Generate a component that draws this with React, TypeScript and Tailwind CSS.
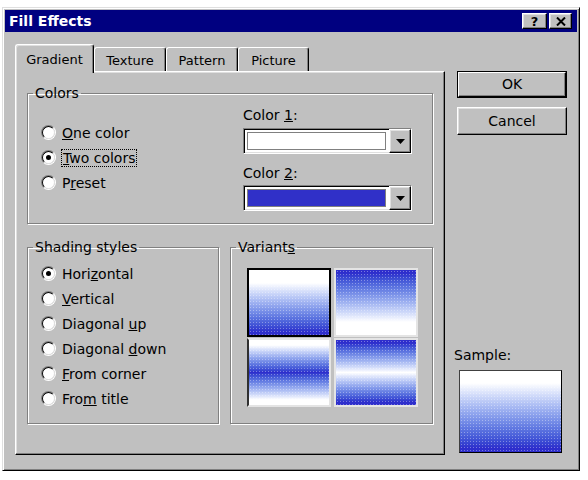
import type { ReactNode } from "react";

const raised =
  "border border-t-white border-l-white border-r-black border-b-black shadow-[inset_-1px_-1px_0_#808080,inset_1px_1px_0_#dfdfdf]";
const sunken =
  "border border-t-[#808080] border-l-[#808080] border-r-white border-b-white shadow-[inset_1px_1px_0_#000,inset_-1px_-1px_0_#dfdfdf]";
const etched = "border border-[#808080] shadow-[inset_1px_1px_0_#fff,1px_1px_0_#fff]";

const Radio = ({ checked }: { checked?: boolean }) => (
  <span className="size-[15px] shrink-0 rounded-full border border-t-[#808080] border-l-[#808080] border-r-white border-b-white">
    <span className="flex size-full items-center justify-center rounded-full border border-t-black border-l-black border-r-[#dfdfdf] border-b-[#dfdfdf] bg-white">
      {checked && <span className="size-[5px] rounded-full bg-black" />}
    </span>
  </span>
);

const Option = ({
  children,
  checked,
  focus,
}: {
  children: ReactNode;
  checked?: boolean;
  focus?: boolean;
}) => (
  <div className="flex h-[25px] items-center">
    <Radio checked={checked} />
    <span
      className={
        focus
          ? "ml-[5px] border border-dotted border-black px-px leading-[16px]"
          : "ml-[6px] leading-[16px]"
      }
    >
      {children}
    </span>
  </div>
);

const ColorCombo = ({ fill }: { fill: string }) => (
  <div className={`flex h-[26px] w-[169px] bg-white ${sunken}`}>
    <div className="flex flex-1 p-[3px]">
      <div className={`flex-1 border border-[#808080] ${fill}`} />
    </div>
    <div className={`flex w-[22px] items-center justify-center bg-[#c0c0c0] ${raised}`}>
      <svg width="9" height="5" viewBox="0 0 9 5">
        <path d="M0 0h9L4.5 5z" fill="#000" />
      </svg>
    </div>
  </div>
);

const Group = ({
  title,
  className,
  children,
}: {
  title: ReactNode;
  className: string;
  children: ReactNode;
}) => (
  <fieldset className={`${etched} ${className}`}>
    <legend className="ml-[5px] px-[2px] leading-[16px]">{title}</legend>
    {children}
  </fieldset>
);

// gradient with a light dither dot texture on top
const Shade = ({ className }: { className: string }) => (
  <div className={`relative overflow-hidden ${className}`}>
    <div className="absolute inset-0 bg-[radial-gradient(circle,rgba(255,255,255,0.35)_0.6px,transparent_1px)] bg-[length:3px_3px]" />
  </div>
);

const tabs = [
  { label: "Gradient", w: "w-[79px]" },
  { label: "Texture", w: "w-[72px]" },
  { label: "Pattern", w: "w-[72px]" },
  { label: "Picture", w: "w-[71px]" },
];

export default function App() {
  return (
    <div className="min-h-screen bg-white pl-[2px] pt-[7px] font-['DejaVu_Sans',sans-serif] text-[14px] text-black">
      <div className="flex h-[464px] w-[578px] flex-col border border-t-[#dfdfdf] border-l-[#dfdfdf] border-r-black border-b-black bg-[#c0c0c0] p-[2px] shadow-[inset_1px_1px_0_#fff,inset_-1px_-1px_0_#808080]">
        {/* title bar */}
        <div className="flex h-[22px] shrink-0 items-center justify-between bg-[#000080] pl-[4px] pr-[5px]">
          <span className="text-[14px] font-bold text-white">Fill Effects</span>
          <div className="flex gap-[2px]">
            <div className={`flex h-[16px] w-[25px] items-center justify-center bg-[#c0c0c0] ${raised}`}>
              <span className="text-[13px] font-bold leading-none">?</span>
            </div>
            <div className={`flex h-[16px] w-[23px] items-center justify-center bg-[#c0c0c0] ${raised}`}>
              <svg width="10" height="9" viewBox="0 0 10 9">
                <path d="M1 0.5l8 8M9 0.5l-8 8" stroke="#000" strokeWidth="2" />
              </svg>
            </div>
          </div>
        </div>

        <div className="flex flex-1 pl-[10px] pt-[12px] pb-[13px]">
          {/* tabs + page */}
          <div className="flex w-[430px] flex-col">
            <div className="flex h-[27px] items-end">
              {tabs.map((t, i) =>
                i === 0 ? (
                  <div
                    key={t.label}
                    className={`relative z-10 -mb-[2px] flex h-[29px] ${t.w} items-start justify-center rounded-t-[3px] border-l border-t border-r border-t-white border-l-white border-r-black bg-[#c0c0c0] pt-[7px] text-[13px] leading-[16px] shadow-[inset_-1px_0_0_#808080,inset_1px_1px_0_#dfdfdf]`}
                  >
                    {t.label}
                  </div>
                ) : (
                  <div
                    key={t.label}
                    className={`flex h-[24px] ${t.w} items-start justify-center rounded-t-[3px] border-l border-t border-r border-t-white border-l-white border-r-black pt-[5px] text-[13px] leading-[16px] shadow-[inset_-1px_0_0_#808080]`}
                  >
                    {t.label}
                  </div>
                )
              )}
            </div>

            <div className={`h-[384px] pl-[11px] pt-[13px] ${raised}`}>
              <Group title="Colors" className="h-[139px] w-[406px]">
                <div className="flex">
                  <div className="w-[215px] pl-[13px] pt-[19px]">
                    <Option>
                      <u>O</u>ne color
                    </Option>
                    <Option checked focus>
                      <u>T</u>wo colors
                    </Option>
                    <Option>
                      P<u>r</u>eset
                    </Option>
                  </div>
                  <div className="pt-[6px]">
                    <div className="leading-[16px]">
                      Color <u>1</u>:
                    </div>
                    <div className="mt-[5px]">
                      <ColorCombo fill="bg-white" />
                    </div>
                    <div className="mt-[11px] leading-[16px]">
                      Color <u>2</u>:
                    </div>
                    <div className="mt-[4px]">
                      <ColorCombo fill="bg-[#3030c8]" />
                    </div>
                  </div>
                </div>
              </Group>

              <div className="mt-[15px] flex gap-[11px]">
                <Group title="Shading styles" className="h-[185px] w-[192px]">
                  <div className="pl-[13px] pt-[6px]">
                    <Option checked>
                      Hori<u>z</u>ontal
                    </Option>
                    <Option>
                      <u>V</u>ertical
                    </Option>
                    <Option>
                      Diagonal <u>u</u>p
                    </Option>
                    <Option>
                      Diagonal <u>d</u>own
                    </Option>
                    <Option>
                      <u>F</u>rom corner
                    </Option>
                    <Option>
                      Fro<u>m</u> title
                    </Option>
                  </div>
                </Group>

                <Group
                  title={
                    <>
                      Variant<u>s</u>
                    </>
                  }
                  className="h-[185px] w-[203px]"
                >
                  <div className="grid grid-cols-[84px_84px] grid-rows-[69px_69px] gap-x-[3px] gap-y-px pl-[16px] pt-[13px]">
                    <Shade className="border-2 border-black bg-linear-to-b from-white from-20% to-[#2e2ecc] to-95%" />
                    <Shade className="border-2 border-[#e4e4e4] bg-linear-to-b from-[#2e2ecc] from-5% to-white to-80%" />
                    <Shade className="border-2 border-[#e4e4e4] border-l-[#303030] bg-linear-to-b from-white from-8% via-[#2e2ecc] to-white to-92%" />
                    <Shade className="border-2 border-[#e4e4e4] bg-linear-to-b from-[#2e2ecc] from-5% via-white to-[#2e2ecc] to-95%" />
                  </div>
                </Group>
              </div>
            </div>
          </div>

          {/* buttons + sample */}
          <div className="ml-[9px] flex w-[113px] flex-col pt-[27px]">
            <div className="ml-[3px] h-[27px] w-[110px] border border-black">
              <div className="flex size-full items-center justify-center border border-t-white border-l-white border-r-black border-b-black shadow-[inset_-1px_-1px_0_#808080]">
                OK
              </div>
            </div>
            <div className={`ml-[3px] mt-[9px] flex h-[28px] w-[110px] items-center justify-center ${raised}`}>
              Cancel
            </div>

            <div className="mt-auto leading-[16px]">Sample:</div>
            <Shade className="mb-[2px] ml-[5px] mt-[7px] h-[83px] w-[103px] border border-t-[#404040] border-l-[#404040] border-r-black border-b-black bg-linear-to-b from-white from-15% to-[#2e2ecc] to-95%" />
          </div>
        </div>
      </div>
    </div>
  );
}
